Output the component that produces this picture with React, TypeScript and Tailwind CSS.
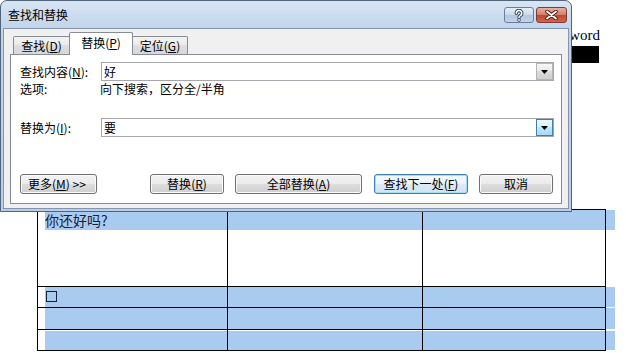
import type { ReactNode } from "react";

const cjk = "font-['Noto_Sans_CJK_SC','Liberation_Sans',sans-serif]";

function Key({ k }: { k: string }) {
  return (
    <>
      (<span className="underline underline-offset-1">{k}</span>)
    </>
  );
}

function DropButton({ hot }: { hot?: boolean }) {
  return (
    <div
      className={
        hot
          ? "ml-auto flex h-[17px] w-[17px] items-center justify-center border border-[#3c7fb1] bg-[linear-gradient(#eaf6fd,#d9f0fc_50%,#bee6fd_50%,#a7d9f5)]"
          : "ml-auto flex h-[17px] w-[17px] items-center justify-center border border-[#b5b5b5] bg-[linear-gradient(#f6f6f6,#e9e9e9_50%,#dcdcdc_50%,#cfcfcf)]"
      }
    >
      <svg width="7" height="4" viewBox="0 0 7 4">
        <path d="M0 0h7L3.5 4z" fill="#000" />
      </svg>
    </div>
  );
}

function Combo({ value, hot }: { value: string; hot?: boolean }) {
  return (
    <div className="flex h-[19px] w-[453px] items-center border border-[#a5a7ad] bg-white">
      <span className="pl-[2px] text-[12px] leading-[14px]">{value}</span>
      <DropButton hot={hot} />
    </div>
  );
}

function Btn({ className, primary, children }: { className: string; primary?: boolean; children: ReactNode }) {
  return (
    <div
      className={
        (primary
          ? "border-[#3c7fb1] bg-[linear-gradient(#f4fafe,#eaf4fb_50%,#dcecf7_50%,#cfe3f1)] shadow-[inset_0_0_0_1px_#a6dcf5] "
          : "border-[#707070] bg-[linear-gradient(#f2f2f2,#ebebeb_50%,#dddddd_50%,#cfcfcf)] shadow-[inset_0_0_0_1px_#fbfbfb] ") +
        "flex h-[20px] items-center justify-center rounded-[3px] border text-[12px] leading-[14px] text-black " +
        className
      }
    >
      {children}
    </div>
  );
}

function Dialog() {
  return (
    <div
      className={
        cjk +
        " absolute left-0 top-0 z-20 flex h-[212px] w-[572px] flex-col rounded-t-[7px] border border-[#52647a] bg-[linear-gradient(#d9e5f3,#c2d5eb_26px,#b9cfe8)] text-black"
      }
    >
      {/* title bar */}
      <div className="flex h-[27px] items-start pl-[7px] pr-[4px]">
        <span className="mt-[7px] text-[12px] leading-[14px]">查找和替换</span>
        <div className="ml-auto mt-[6px] flex gap-[2px]">
          <div className="flex h-[16px] w-[30px] items-center justify-center rounded-[3px] border border-[#6a7f9d] bg-[linear-gradient(#e6eef8,#c9d8eb_50%,#b3c8e1_50%,#bfd2e8)]">
            <svg width="10" height="13" viewBox="0 0 10 13">
              <path d="M2.3 4.3a2.7 2.7 0 1 1 4 2.3c-.9.5-1.3 1-1.3 2" fill="none" stroke="#2d3e58" strokeWidth="3.4" strokeLinecap="round" />
              <circle cx="5" cy="11" r="1.7" fill="#2d3e58" />
              <path d="M2.3 4.3a2.7 2.7 0 1 1 4 2.3c-.9.5-1.3 1-1.3 2" fill="none" stroke="#fff" strokeWidth="1.6" strokeLinecap="round" />
              <circle cx="5" cy="11" r="0.9" fill="#fff" />
            </svg>
          </div>
          <div className="flex h-[16px] w-[31px] items-center justify-center rounded-[3px] border border-[#7e3b30] bg-[linear-gradient(#eab0a2,#d77a66_50%,#c2452f_50%,#d2654e)]">
            <svg width="13" height="10" viewBox="0 0 13 10">
              <path d="M2 1.5l9 7M11 1.5l-9 7" stroke="#4a1a12" strokeWidth="3.6" strokeLinecap="round" />
              <path d="M2 1.5l9 7M11 1.5l-9 7" stroke="#fff" strokeWidth="1.8" strokeLinecap="round" />
            </svg>
          </div>
        </div>
      </div>

      {/* body */}
      <div className="mx-[2px] mb-[2px] flex flex-1 flex-col border border-[#8496ad] bg-[#f0f0f0] px-[6px] pt-[3px]">
        {/* tabs */}
        <div className="flex h-[22px] items-end pl-[3px] text-[12px] leading-[14px]">
          <div className="flex h-[18px] w-[57px] items-center justify-center rounded-t-[2px] border border-b-0 border-[#898c95] bg-[linear-gradient(#f3f3f3,#ebebeb_50%,#dedede_50%,#d7d7d7)]">
            查找<Key k="D" />
          </div>
          <div className="relative z-10 -mb-px ml-[-1px] flex h-[23px] w-[64px] items-center justify-center rounded-t-[2px] border border-b-0 border-[#898c95] bg-white pb-[2px]">
            替换<Key k="P" />
          </div>
          <div className="ml-[-1px] flex h-[18px] w-[56px] items-center justify-center rounded-t-[2px] border border-b-0 border-[#898c95] bg-[linear-gradient(#f3f3f3,#ebebeb_50%,#dedede_50%,#d7d7d7)]">
            定位<Key k="G" />
          </div>
        </div>

        {/* panel */}
        <div className="flex h-[150px] flex-col border border-[#898c95] bg-white pl-[9px] pt-[7px] text-[12px] leading-[14px]">
          <div className="flex items-center">
            <span className="w-[81px]">
              查找内容<Key k="N" />:
            </span>
            <Combo value="好" />
          </div>
          <div className="mt-[1px] flex h-[14px] items-center">
            <span className="w-[80px]">选项:</span>
            <span>向下搜索，区分全/半角</span>
          </div>
          <div className="mt-[22px] flex items-center">
            <span className="w-[81px]">
              替换为<Key k="I" />:
            </span>
            <Combo value="要" hot />
          </div>
          <div className="mt-[37px] flex">
            <Btn className="w-[77px] justify-start pl-[7px]">
              更多<Key k="M" />&nbsp;&gt;&gt;
            </Btn>
            <Btn className="ml-[53px] w-[74px]">
              替换<Key k="R" />
            </Btn>
            <Btn className="ml-[11px] w-[127px]">
              全部替换<Key k="A" />
            </Btn>
            <Btn className="ml-[12px] w-[94px]" primary>
              查找下一处<Key k="F" />
            </Btn>
            <Btn className="ml-[11px] w-[74px]">取消</Btn>
          </div>
        </div>
      </div>
    </div>
  );
}

function Row({ h, last, band, children }: { h: string; last?: boolean; band: "top" | "full" | "gap"; children?: ReactNode }) {
  return (
    <div className={"relative flex " + h + (last ? "" : " border-b border-black")}>
      {band === "top" && <div className="absolute left-[7px] top-0 z-0 h-[20px] w-[570px] bg-[#a9cbef]" />}
      {band === "full" && <div className="absolute inset-y-0 left-[7px] z-0 w-[570px] bg-[#a9cbef]" />}
      {band === "gap" && <div className="absolute bottom-0 left-[7px] top-[1px] z-0 w-[570px] bg-[#a9cbef]" />}
      <div className="relative z-10 w-[190px] border-r border-black">{children}</div>
      <div className="relative z-10 w-[195px] border-r border-black" />
      <div className="relative z-10 flex-1 border-r border-black" />
    </div>
  );
}

export default function App() {
  return (
    <div className="relative h-[353px] w-[626px] overflow-hidden bg-white">
      <div className="pt-[26px]">
        <div className="flex h-[18px] w-[600px] justify-end font-['Liberation_Serif',serif] text-[15px] leading-[18px] text-black">
          word
        </div>
        <div className="ml-[572px] mt-[2px] h-[17px] w-[27px] bg-black" />

        <div className={cjk + " ml-[37px] mt-[146px] w-[569px] border-y border-l border-black text-[#14213d]"}>
          <Row h="h-[77px]" band="top">
            <div className="pl-[7px] text-[14px] leading-[20px]">你还好吗?</div>
          </Row>
          <Row h="h-[21px]" band="full">
            <div className="ml-[8px] mt-[4px] h-[11px] w-[11px] border border-[#14213d]" />
          </Row>
          <Row h="h-[22px]" band="full" />
          <Row h="h-[20px]" band="gap" last />
        </div>
      </div>
      <Dialog />
    </div>
  );
}
